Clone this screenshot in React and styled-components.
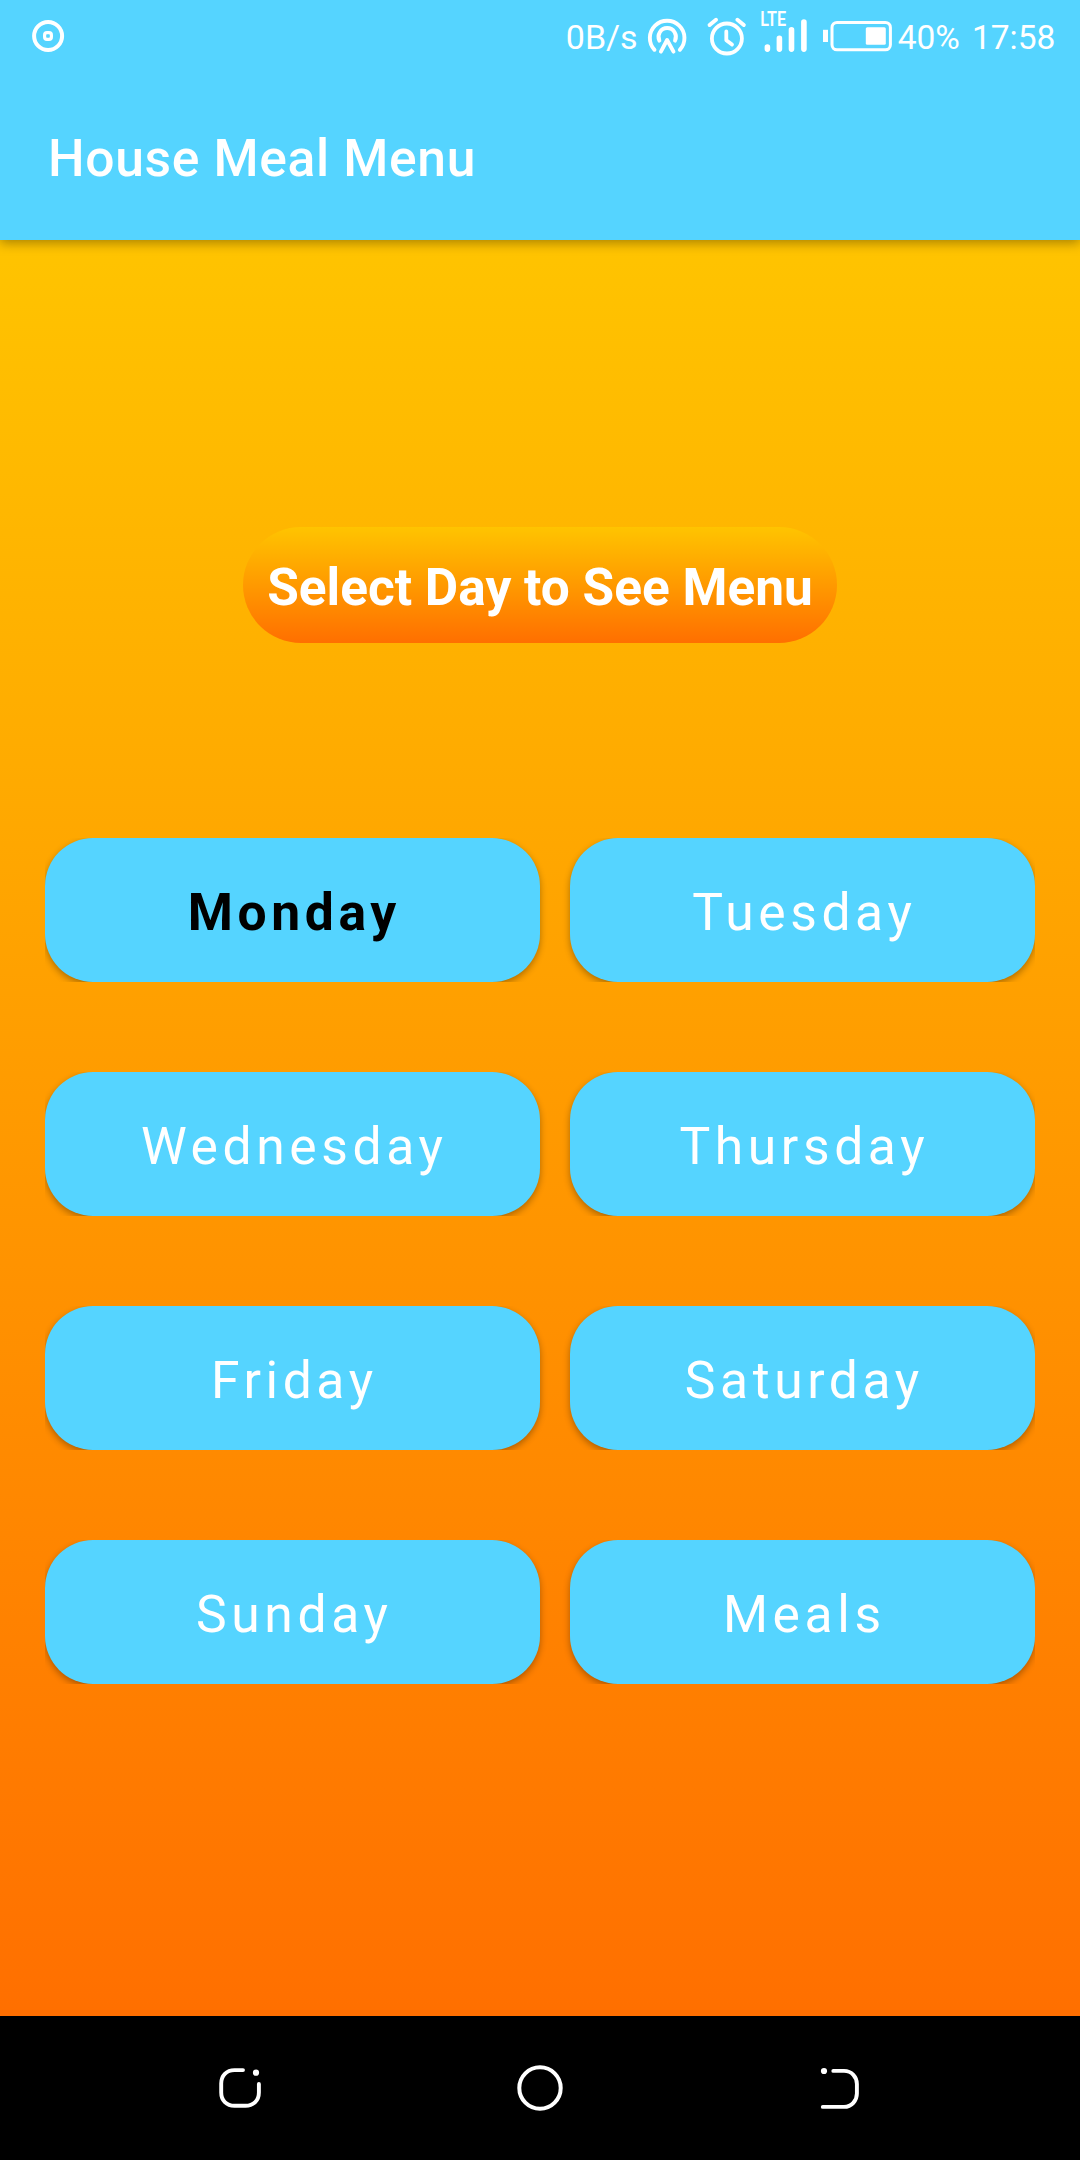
import React from 'react';
import styled, { createGlobalStyle } from 'styled-components';

const SKY = '#55d4ff';
const SUNSET = 'linear-gradient(180deg, #ffc400 0%, #ff6f00 100%)';

const GlobalStyle = createGlobalStyle`
  * { box-sizing: border-box; }
  body { margin: 0; background: #000; }
`;

const Screen = styled.div`
  width: 1080px;
  height: 2160px;
  display: flex;
  flex-direction: column;
  overflow: hidden;
  font-family: Roboto, "Liberation Sans", sans-serif;
  color: #fff;
`;

const Header = styled.header`
  height: 240px;
  flex: none;
  display: flex;
  flex-direction: column;
  background: ${SKY};
  box-shadow: 0 3px 11px rgba(0, 0, 0, 0.34);
  z-index: 1;
`;

const StatusBar = styled.div`
  height: 72px;
  display: flex;
  justify-content: space-between;
  padding: 0 24.7px 0 28px;
`;

const StatusGroup = styled.div`
  display: flex;
  align-items: flex-start;
`;

const StatusText = styled.span`
  font-size: ${(p) => p.$size || 33.5}px;
  line-height: 72px;
  height: 72px;
  padding-top: ${(p) => (p.$size ? 1 : 1.6)}px;
  margin-right: ${(p) => p.$gap || 0}px;
  white-space: nowrap;
`;

const Glyph = styled.svg`
  display: block;
  flex: none;
  fill: none;
  stroke: #fff;
  stroke-linecap: round;
  stroke-linejoin: round;
`;

const Toolbar = styled.div`
  flex: 1;
  display: flex;
  align-items: center;
  padding: 5px 48px 0;
`;

const Title = styled.h1`
  margin: 0;
  font-size: 51.6px;
  font-weight: 500;
  letter-spacing: 0.0125em;
`;

const Content = styled.main`
  flex: 1;
  display: flex;
  flex-direction: column;
  align-items: center;
  padding-top: 287px;
  background: ${SUNSET};
`;

const Prompt = styled.div`
  height: 116px;
  display: flex;
  align-items: center;
  padding: 5px 24px 0;
  border-radius: 58px;
  background: ${SUNSET};
  font-size: 51.4px;
  font-weight: 700;
  white-space: nowrap;
`;

const DayList = styled.div`
  width: 990px;
  margin-top: 195px;
  display: flex;
  flex-direction: column;
  gap: 90px;
`;

const DayRow = styled.div`
  height: 144px;
  display: grid;
  grid-template-columns: 495px 465px;
  gap: 30px;
  overflow: hidden;
`;

const DayButton = styled.button`
  border: 0;
  border-radius: 48px;
  padding: 5px 0 0 3.6px;
  background: ${SKY};
  box-shadow: 0 3px 7px rgba(0, 0, 0, 0.32);
  font-family: inherit;
  font-size: 51.6px;
  font-weight: ${(p) => (p.$today ? 700 : 400)};
  letter-spacing: 0.0893em;
  color: ${(p) => (p.$today ? '#000' : '#fff')};
`;

const NavBar = styled.nav`
  height: 144px;
  flex: none;
  display: flex;
  justify-content: center;
  align-items: center;
  gap: 240px;
  background: #000;
`;

const RecordIcon = () => (
  <Glyph width="40" height="72" viewBox="28 0 40 72">
    <circle cx="48.1" cy="36" r="14" strokeWidth="4" />
    <rect x="44.6" y="32.6" width="6.8" height="6.8" rx="2.4" strokeWidth="3.2" />
  </Glyph>
);

const HotspotIcon = () => (
  <Glyph width="60" height="72" viewBox="640 0 60 72" strokeWidth="3.9">
    <path d="M654.5 49.8A17.3 17.3 0 1 1 679.8 49.8" />
    <path d="M659.4 40.6A8.7 8.7 0 1 1 675 40.6" />
    <path d="M660.9 51.6L667.1 40L673.5 51.6" />
  </Glyph>
);

const AlarmIcon = () => (
  <Glyph width="56" height="72" viewBox="700 0 56 72" strokeWidth="3.8">
    <circle cx="726.9" cy="38.5" r="15" />
    <path d="M709.6 25L716 19.8M737.4 19.8L743.8 25" strokeWidth="4" />
    <path d="M726.3 31.5V40.2L732 44.6" />
  </Glyph>
);

const SignalIcon = () => (
  <Glyph width="64" height="72" viewBox="756 0 64 72">
    <text
      x="760.2"
      y="26"
      fill="#fff"
      stroke="none"
      fontSize="20"
      fontWeight="600"
      textLength="26"
      lengthAdjust="spacingAndGlyphs"
    >
      LTE
    </text>
    <path d="M767.4 47V49.1M779.4 38.4V49.1M791.5 29.8V49.1M803.9 22V49.1" strokeWidth="5.6" />
  </Glyph>
);

const BatteryIcon = () => (
  <Glyph width="78" height="72" viewBox="820 0 78 72">
    <rect x="823" y="29.8" width="5" height="12.2" fill="#fff" stroke="none" />
    <rect x="832" y="22.4" width="58.4" height="27.4" rx="5" strokeWidth="3" />
    <rect x="865.8" y="27.2" width="20" height="17.6" rx="1.5" fill="#fff" stroke="none" />
  </Glyph>
);

const RecentsIcon = () => (
  <Glyph width="60" height="60" viewBox="210 2058 60 60" strokeWidth="3.9">
    <path d="M243 2070.1H234.5C226.5 2070.1 221.2 2075.5 221.2 2083.5V2092.5C221.2 2100.5 226.5 2105.8 234.5 2105.8H245.5C253.5 2105.8 258.9 2100.5 258.9 2092.5V2084" />
    <circle cx="256" cy="2072.7" r="3.1" fill="#fff" stroke="none" />
  </Glyph>
);

const HomeIcon = () => (
  <Glyph width="60" height="60" viewBox="510 2058 60 60">
    <circle cx="540" cy="2088" r="20.7" strokeWidth="4" />
  </Glyph>
);

const BackIcon = () => (
  <Glyph width="60" height="60" viewBox="810 2058 60 60" strokeWidth="3.9">
    <path d="M833.3 2070.9H844C851.7 2070.9 856.9 2077 856.9 2084V2093.5C856.9 2100.5 851.7 2106.9 844 2106.9H822.8" />
    <circle cx="824" cy="2071" r="3.1" fill="#fff" stroke="none" />
  </Glyph>
);

const ROWS = [
  ['Monday', 'Tuesday'],
  ['Wednesday', 'Thursday'],
  ['Friday', 'Saturday'],
  ['Sunday', 'Meals'],
];

export default function App() {
  return (
    <Screen>
      <GlobalStyle />
      <Header>
        <StatusBar>
          <RecordIcon />
          <StatusGroup>
            <StatusText $size={34} $gap={2}>0B/s</StatusText>
            <HotspotIcon />
            <AlarmIcon />
            <SignalIcon />
            <BatteryIcon />
            <StatusText $gap={12}>40%</StatusText>
            <StatusText>17:58</StatusText>
          </StatusGroup>
        </StatusBar>
        <Toolbar>
          <Title>House Meal Menu</Title>
        </Toolbar>
      </Header>
      <Content>
        <Prompt>Select Day to See Menu</Prompt>
        <DayList>
          {ROWS.map((days) => (
            <DayRow key={days[0]}>
              {days.map((day) => (
                <DayButton key={day} type="button" $today={day === 'Monday'}>
                  {day}
                </DayButton>
              ))}
            </DayRow>
          ))}
        </DayList>
      </Content>
      <NavBar>
        <RecentsIcon />
        <HomeIcon />
        <BackIcon />
      </NavBar>
    </Screen>
  );
}
